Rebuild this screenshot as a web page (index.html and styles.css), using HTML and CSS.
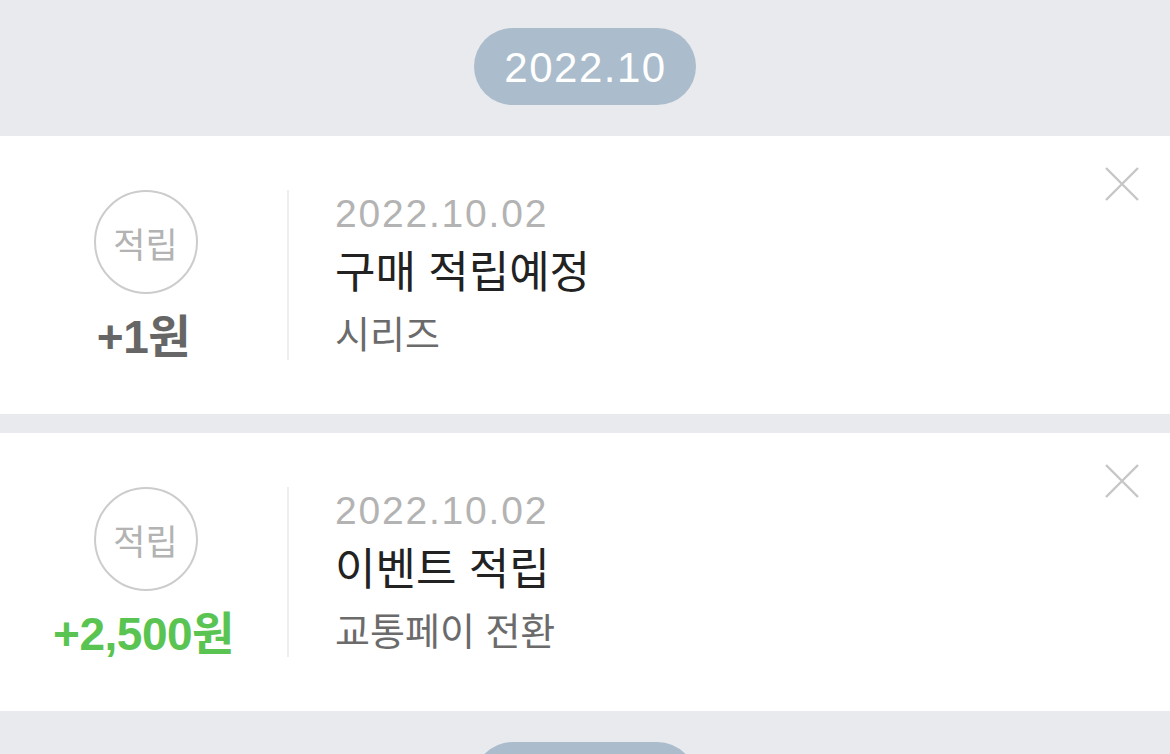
FILE: index.html
```html
<!DOCTYPE html>
<html lang="ko">
<head>
    <meta charset="UTF-8">
    <meta name="viewport" content="width=device-width, initial-scale=1.0">
    <title>적립 내역</title>
    <link rel="stylesheet" href="styles.css">
</head>
<body>

<section class="month">
  <div class="month-head"><span class="month-pill">2022.10</span></div>

  <div class="point-card">
    <div class="point-left">
      <div class="point-badge">적립</div>
      <div class="point-amount">+1원</div>
    </div>
    <div class="point-info">
      <p class="point-date">2022.10.02</p>
      <p class="point-title">구매 적립예정</p>
      <p class="point-sub">시리즈</p>
    </div>
    <button class="point-close" aria-label="삭제">
      <svg width="36" height="36" viewBox="0 0 36 36"><path d="M2 2 L34 34 M34 2 L2 34" stroke="#c6c6c6" stroke-width="2.4" fill="none"/></svg>
    </button>
  </div>

  <div class="point-card">
    <div class="point-left">
      <div class="point-badge">적립</div>
      <div class="point-amount green">+2,500원</div>
    </div>
    <div class="point-info">
      <p class="point-date">2022.10.02</p>
      <p class="point-title">이벤트 적립</p>
      <p class="point-sub">교통페이 전환</p>
    </div>
    <button class="point-close" aria-label="삭제">
      <svg width="36" height="36" viewBox="0 0 36 36"><path d="M2 2 L34 34 M34 2 L2 34" stroke="#c6c6c6" stroke-width="2.4" fill="none"/></svg>
    </button>
  </div>
</section>

<section class="month next">
  <div class="month-head"><span class="month-pill">2022.09</span></div>
</section>

</body>
</html>
```

FILE: styles.css
```css
body {
  margin: 0;
  background-color: #e9eaee;
  font-family: 'Liberation Sans', 'Noto Sans CJK KR', sans-serif;
  overflow: hidden;
}

p {
  margin: 0;
}

.month-head {
  display: flex;
  justify-content: center;
  padding: 28px 0 31px;
}

.month.next .month-head {
  padding-top: 31px;
}

.month-pill {
  display: inline-block;
  width: 222px;
  height: 77px;
  line-height: 79px;
  border-radius: 39px;
  background-color: #abbdcc;
  color: #fff;
  font-size: 42px;
  letter-spacing: 1.5px;
  text-indent: 1px;
  text-align: center;
}

.point-card {
  position: relative;
  display: flex;
  height: 170px;
  padding: 54px 0;
  margin-bottom: 19px;
  background-color: #fff;
}

.point-card:last-child {
  margin-bottom: 0;
}

.point-left {
  width: 287px;
  border-right: 2px solid #eeeeef;
  display: flex;
  flex-direction: column;
  align-items: center;
}

.point-badge {
  flex-shrink: 0;
  width: 100px;
  height: 100px;
  border: 2px solid #cccccc;
  border-radius: 50%;
  display: flex;
  align-items: center;
  justify-content: center;
  color: #b3b3b3;
  font-size: 35px;
  margin-left: 4px;
}

.point-amount {
  flex-shrink: 0;
  margin-top: 19px;
  font-size: 46px;
  font-weight: bold;
  color: #666;
  letter-spacing: -0.5px;
  line-height: 48px;
}

.point-amount.green {
  color: #5ac452;
}

.point-info {
  padding-left: 46px;
  padding-top: 1px;
}

.point-date {
  font-size: 39px;
  line-height: 46px;
  letter-spacing: 1.8px;
  color: #b3b3b3;
}

.point-title {
  margin-top: 9px;
  font-size: 44px;
  line-height: 54px;
  color: #222;
}

.point-sub {
  margin-top: 10px;
  font-size: 38px;
  line-height: 50px;
  color: #6b6b6b;
}

.point-close {
  position: absolute;
  top: 30px;
  right: 30px;
  padding: 0;
  border: none;
  background: none;
  cursor: pointer;
}
```
